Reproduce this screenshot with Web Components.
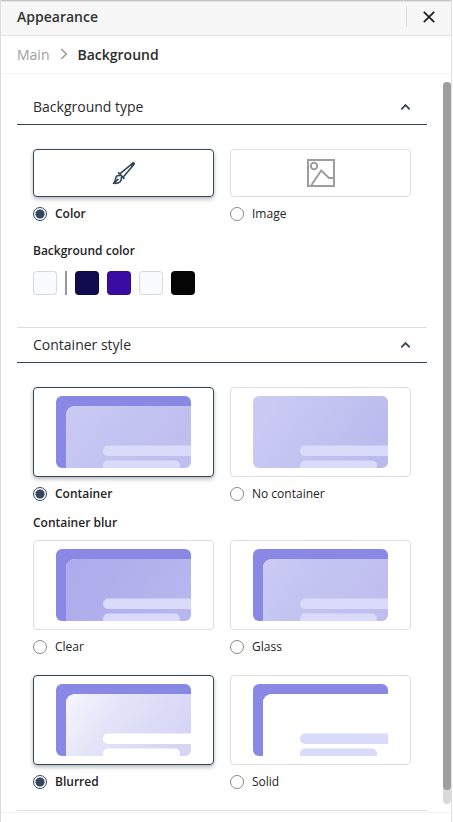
<!DOCTYPE html>
<html lang="en">
<head>
<meta charset="utf-8">
<title>Appearance</title>
<style>
html,body{margin:0;height:100%;overflow:hidden;background:#fff}
body{font-family:"Open Sans","Noto Sans",sans-serif;color:#242424}
</style>
</head>
<body>
<appearance-panel>
  <panel-header slot="header">Appearance</panel-header>
  <bread-crumb slot="header"><span slot="parent">Main</span>Background</bread-crumb>
  <setting-section heading="Background type" style="--head:50px;--end:32px">
    <option-grid>
      <option-card selected style="--h:48px"><brush-icon slot="art"></brush-icon>Color</option-card>
      <option-card style="--h:48px"><image-icon slot="art"></image-icon>Image</option-card>
    </option-grid>
    <field-label style="--top:18px;--gap:12px">Background color</field-label>
    <colour-row></colour-row>
  </setting-section>
  <setting-section heading="Container style" style="--head:34px;--end:18px">
    <option-grid>
      <option-card selected><container-art slot="art" kind="glass"></container-art>Container</option-card>
      <option-card><container-art slot="art" kind="none"></container-art>No container</option-card>
    </option-grid>
    <field-label style="--top:10px;--gap:9px">Container blur</field-label>
    <option-grid>
      <option-card><container-art slot="art" kind="clear"></container-art>Clear</option-card>
      <option-card><container-art slot="art" kind="glass"></container-art>Glass</option-card>
      <option-card selected><container-art slot="art" kind="blurred"></container-art>Blurred</option-card>
      <option-card><container-art slot="art" kind="solid"></container-art>Solid</option-card>
    </option-grid>
  </setting-section>
</appearance-panel>
<script>
const define = (name, html, setup) => customElements.define(name, class extends HTMLElement {
  connectedCallback() {
    if (this.shadowRoot) return;
    const root = this.attachShadow({mode: 'open'});
    root.innerHTML = typeof html === 'function' ? html(this) : html;
    if (setup) setup(this, root);
  }
});

define('appearance-panel', `<style>
:host{display:flex;flex-direction:column;box-sizing:border-box;width:452px;height:822px;border-left:1px solid #dcdcdc;border-right:1px solid #e0e0e0;background:#fff}
.view{display:flex;flex:none;height:738px;border-bottom:1px solid #f3f3f3}
.content{width:410px;padding-left:16px;flex:none}
.track{margin:8px 0 8px 16px;width:8px;height:722px;border-radius:4px;background:#d9d9d9}
.thumb{height:708px;border-radius:4px;background:#9e9e9e}
</style><slot name="header"></slot><div class="view"><div class="content"><slot></slot></div><div class="track"><div class="thumb"></div></div></div>`);

define('panel-header', `<style>
:host{display:flex;align-items:center;box-sizing:border-box;height:36px;flex:none;padding:0 15px 2px 16px;border-bottom:1px solid #e5e5e5;background:linear-gradient(#c4c4c4 0 1px,#e4e4e4 1px 2px,#f7f7f7 2px);font:600 14px/20px "Open Sans",sans-serif;color:#333}
.title{flex:1}.rule{width:1px;height:21px;background:#dcdcdc;margin-right:15px}
svg{display:block}
</style><span class="title"><slot></slot></span><span class="rule"></span>
<svg width="14" height="14" viewBox="0 0 14 14" fill="none" stroke="#222" stroke-width="1.8"><path d="M1.8 1.8 12.2 12.2M12.2 1.8 1.8 12.2"/></svg>`);

define('bread-crumb', `<style>
:host{display:flex;align-items:center;box-sizing:border-box;height:38px;flex:none;padding:0 16px;border-bottom:1px solid #f3f3f3;font:600 14px/20px "Open Sans",sans-serif;color:#2b2b2b}
.parent{font-weight:400;color:#9e9e9e}
svg{margin:0 10px 2px}
</style><span class="parent"><slot name="parent"></slot></span>
<svg width="8" height="12" viewBox="0 0 8 12" fill="none" stroke="#9e9e9e" stroke-width="1.6"><path d="M1.2 1 6.3 6 1.2 11"/></svg><span><slot></slot></span>`);

define('setting-section', el => `<style>
:host{display:block;border-bottom:1px solid #dedede}
header{display:flex;align-items:flex-end;justify-content:space-between;box-sizing:content-box;height:var(--head);border-bottom:1px solid #33475b;padding:0 16px;font:400 14px/34px "Open Sans",sans-serif;color:#2b2b2b}
svg{margin:0 0 13px}
.body{padding:24px 16px var(--end)}
</style><header><span>${el.getAttribute('heading')}</span>
<svg width="11" height="8" viewBox="0 0 11 8" fill="none" stroke="#33475b" stroke-width="1.8"><path d="M1.3 6.3 5.5 2.1 9.7 6.3"/></svg></header><div class="body"><slot></slot></div>`);

define('option-grid', `<style>:host{display:grid;grid-template-columns:181px 181px;column-gap:16px;row-gap:18px}</style><slot></slot>`);

define('option-card', `<style>
:host{display:block;color:#242424;font:400 12px/17px "Open Sans",sans-serif}
:host([selected]){font-weight:600}
.card{display:flex;align-items:center;justify-content:center;box-sizing:border-box;height:var(--h,90px);border:1px solid #dedede;border-radius:4px;background:#fff}
:host([selected]) .card{border-color:#33475b;box-shadow:0 2px 4px rgba(0,0,0,.3)}
.choice{display:flex;align-items:center;gap:8px;height:17px;margin-top:10px}
.radio{display:block;box-sizing:border-box;width:14px;height:14px;border:1px solid #8a8a8a;border-radius:50%;margin-bottom:3px}
:host([selected]) .radio{border-color:#33475b;background:radial-gradient(circle,#33475b 4.2px,#fff 4.9px)}
.text{margin-bottom:5px}
</style><div class="card"><slot name="art"></slot></div><div class="choice"><span class="radio"></span><span class="text"><slot></slot></span></div>`);

define('field-label', `<style>:host{display:block;margin:var(--top) 0 var(--gap);font:600 12px/17px "Open Sans",sans-serif;color:#242424}</style><slot></slot>`);

define('colour-row', `<style>
:host{display:flex;gap:8px}
i{box-sizing:border-box;width:24px;height:24px;border-radius:4px;border:1px solid rgba(0,0,0,.13)}
b{width:2px;height:24px;background:#999}
</style><i style="background:#fafbff"></i><b></b><i style="background:#110b4f"></i><i style="background:#3a0ca3"></i><i style="background:#fafbff"></i><i style="background:#050505"></i>`);

define('brush-icon', `<style>:host{display:block}svg{display:block}</style>
<svg width="24" height="24" viewBox="0 0 24 24" fill="none" stroke="#33475b" stroke-width="1.6" stroke-linejoin="round">
<path d="M8 12.6 20 2.8Q21.3 1.6 22 2.3 22.4 2.9 21.3 4.2L11.3 16"/><path d="M19.9 3.9 21.3 2.6" stroke-width="3" stroke-linecap="round"/>
<path d="M6.2 11.3 12.4 17.8" stroke-width="1.8"/><path d="M7.9 14.6Q3.6 13.8 3.6 18 3.6 20.2 1.4 22.3 6.4 22.7 8.1 20.8 9.9 18.9 9.4 15.8"/><path d="M2.6 21.7 6.4 17.9"/></svg>`);

define('image-icon', `<style>:host{display:block}svg{display:block}</style>
<svg width="28" height="28" viewBox="0 0 28 28" fill="none" stroke="#9e9e9e" stroke-width="2"><rect x="1" y="1" width="26" height="26"/><circle cx="7" cy="7" r="3.2"/><path d="M4.5 26 14.2 11.5 22 19h5"/></svg>`);

let serial = 0;
const fills = {
  glass: ['#cbcaf4', '#c4c4f2', '#bfbeef'],
  none: ['#cbcaf4', '#c4c4f2', '#bbbaed'],
  clear: ['#adabeb', '#b0afec', '#b7b6ef'],
  blurred: ['#f5f4fe', '#e4e4f8', '#d6d5f6'],
  solid: ['#fff', '#fff', '#fff']
};
define('container-art', el => {
  const kind = el.getAttribute('kind'), id = serial++, [a, b, c] = fills[kind];
  const bar = kind === 'blurred' ? '#fff' : '#dadafb';
  const sheet = kind === 'none'
    ? `<rect width="135" height="72" fill="url(#g${id})"/>`
    : `<path d="M0 0H135V10H20Q10 10 10 20V72H0Z" fill="#8988e5"/><path d="M10 72V20Q10 10 20 10H135V72Z" fill="url(#g${id})"/>`;
  return `<style>:host,svg{display:block}</style><svg width="135" height="72" viewBox="0 0 135 72">
<defs><clipPath id="c${id}"><rect width="135" height="72" rx="6"/></clipPath>
<linearGradient id="g${id}" gradientUnits="userSpaceOnUse" x1="15" y1="10" x2="110" y2="75"><stop stop-color="${a}"/><stop offset=".4" stop-color="${b}"/><stop offset="1" stop-color="${c}"/></linearGradient></defs>
<g clip-path="url(#c${id})">${sheet}<rect x="47" y="49.5" width="100" height="10.5" rx="5" fill="${bar}"/><rect x="47" y="64.5" width="77" height="10.5" rx="5" fill="${bar}"/></g></svg>`;
});
</script>
</body>
</html>
